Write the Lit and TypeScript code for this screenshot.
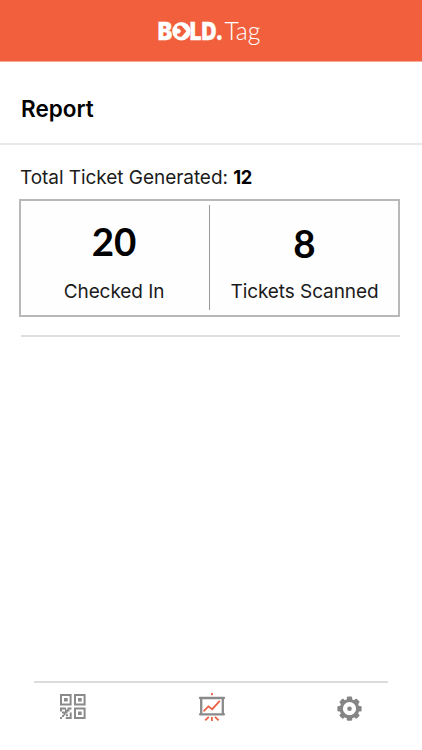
import { LitElement, html, css, svg } from "lit";
import { customElement, property } from "lit/decorators.js";

@customElement("brand-logo")
class BrandLogo extends LitElement {
  static styles = css`
    :host { display: block; width: 106px; height: 32px; }
    svg { display: block; }
    .bold { font: 900 24.3px Inter, sans-serif; fill: #fff; stroke: #fff; stroke-width: .4; }
    .thin { font: 300 25px Lato, sans-serif; fill: #fff; }
  `;
  render() {
    return html`<svg width="106" height="32" viewBox="0 0 106 32">
      <text class="bold" transform="translate(0.8 25) scale(.89 1)">B</text>
      <circle cx="24.4" cy="16.2" r="9.2" fill="#fff" />
      <path d="M20.2 11.6Q22.7 9.9 24.8 11L29.4 16.2L24.8 21.6Q22.2 22.4 20.2 20.8V18.6H22.4L24 16.2L22.4 13.8H20.2Z" fill="#f15f3d" />
      <text class="bold" transform="translate(32.8 25) scale(.85 1)">LD.</text>
      <text class="thin" transform="translate(67.4 25) scale(.99 1)">Tag</text>
    </svg>`;
  }
}

@customElement("stat-cell")
class StatCell extends LitElement {
  @property() value = "";
  @property() label = "";
  static styles = css`
    :host { display: flex; flex-direction: column; align-items: center; }
    .value { flex: none; font: 700 38.5px/44px Lato, sans-serif; color: #000; }
    .label { margin-top: auto; margin-bottom: 11px; font: 400 19px/24px Inter, sans-serif; letter-spacing: -.08px; color: #1b1b1b; white-space: nowrap; }
  `;
  render() {
    return html`<div class="value">${this.value}</div><div class="label">${this.label}</div>`;
  }
}

const teeth = [0, 45, 90, 135, 180, 225, 270, 315];

@customElement("app-root")
class AppRoot extends LitElement {
  static styles = css`
    :host { display: flex; flex-direction: column; height: 750px; box-sizing: border-box; background: #fff; font-family: Inter, sans-serif; color: #1b1b1b; overflow: hidden; }
    .top { height: 62px; box-sizing: border-box; padding-top: 15px; background: #f15f3d; border-bottom: 1px solid #f7ab98; display: flex; justify-content: center; padding-right: 2px; }
    .heading { height: 83px; box-sizing: border-box; border-bottom: 2px solid #e9e9e9; padding: 32px 0 0 21px; margin-bottom: 19px; }
    h1 { margin: 0; font: 600 22.5px/30px Inter, sans-serif; color: #000; }
    .total { height: 27px; padding-left: 20px; font-size: 19px; line-height: 27px; letter-spacing: -.05px; white-space: nowrap; }
    .total b { font-weight: 700; font-size: 18.3px; letter-spacing: -.3px; color: #000; }
    .card { height: 118px; box-sizing: border-box; margin: 8px 22px 0 19px; border: 2px solid #b8b8b8; background: #fefefe; display: grid; grid-template-columns: 188px 1px 1fr; }
    .first { padding: 18px 2px 0 0; }
    .second { padding: 20px 0 0 1px; }
    .divider { background: #999; margin: 4px 0 5px; }
    .rule { height: 2px; margin: 18px 22px 0 21px; background: #dfdfdf; }
    .nav { margin: auto 34px 0; height: 69px; box-sizing: border-box; border-top: 2px solid #dcdcdc; display: flex; justify-content: space-between; padding: 9px 24px 0; }
    .nav svg { display: block; }
  `;

  render() {
    return html`
      <header class="top"><brand-logo></brand-logo></header>
      <div class="heading"><h1>Report</h1></div>
      <div class="total">Total Ticket Generated: <b>12</b></div>
      <section class="card">
        <stat-cell class="first" value="20" label="Checked In"></stat-cell>
        <div class="divider"></div>
        <stat-cell class="second" value="8" label="Tickets Scanned"></stat-cell>
      </section>
      <div class="rule"></div>
      <nav class="nav">
        <svg width="30" height="32" viewBox="0 0 30 32">
          <path d="M3 3h9.6v9.4H3zM17 3h9.6v9.4H17zM17 16.6h9.6V26H17z" fill="none" stroke="#8a8a8a" stroke-width="2" />
          <path fill="#8a8a8a" d="M6 6h3.7v3.5H6zM20 6h3.7v3.5H20zM20 19.5h3.7V23H20zM2 15.6h6v2H4v2H2zM9.5 15.6h4v2h-2v2h-2v1.8h-2v2h-2v-2h-1.5v-2h3v-2h2.5zM11.7 20.5h2V27h-6v-2h4zM2 25h2v2H2zM4 23h2v2H4zM8 22.2h2v2H8z" />
        </svg>
        <svg width="30" height="32" viewBox="0 0 30 32">
          <path d="M4 6h24M4 22.3h24M5.2 6v16M26.8 6v16" fill="none" stroke="#8a8a8a" stroke-width="2.3" stroke-linecap="round" />
          <path d="M15.9 1v2.3M15.9 25v4M12.8 24.8l-3.6 3.6M19 24.8l3.6 3.6M7.6 19.4l4.8-5 3.8 2.8 7.6-8.3" fill="none" stroke="#eb6346" stroke-width="1.8" />
        </svg>
        <svg width="30" height="32" viewBox="0 0 30 32">
          <g fill="#858585">
            ${teeth.map((a) => svg`<rect x="12.8" y="4.6" width="5.4" height="5" rx="1.2" transform="rotate(${a} 15.5 16.7)" />`)}
            <circle cx="15.5" cy="16.7" r="2.3" />
          </g>
          <circle cx="15.5" cy="16.7" r="8.2" fill="none" stroke="#858585" stroke-width="3.2" />
        </svg>
      </nav>
    `;
  }
}
